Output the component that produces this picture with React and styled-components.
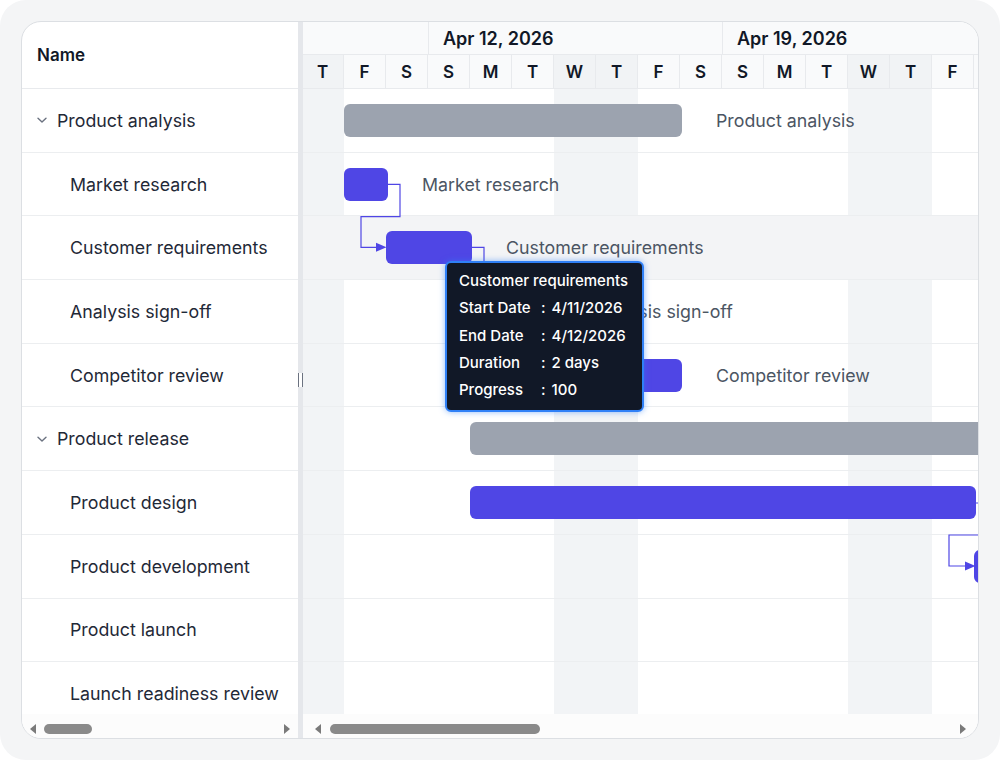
import React from "react";
import styled, { createGlobalStyle } from "styled-components";

const GlobalStyle = createGlobalStyle`
  html, body { margin: 0; padding: 0; background: #ffffff; }
  body { font-family: Inter, "Noto Sans", sans-serif; -webkit-font-smoothing: antialiased; }
  * { box-sizing: border-box; }
`;

const DAY = 42;
const ROW_H = 63.7;
const BAR_COLOR = "#4f46e5";
const SUMMARY_COLOR = "#9ca3af";

const days = ["T", "F", "S", "S", "M", "T", "W", "T", "F", "S", "S", "M", "T", "W", "T", "F", "S"];
const shaded = new Set([0, 6, 7, 13, 14]);

const weeks = [
  { label: "", span: 3 },
  { label: "Apr 12, 2026", span: 7 },
  { label: "Apr 19, 2026", span: 7 },
];

const tasks = [
  { name: "Product analysis", parent: true, start: 1, dur: 8, summary: true, label: true },
  { name: "Market research", start: 1, dur: 1, label: true },
  { name: "Customer requirements", start: 2, dur: 2, label: true, highlight: true },
  { name: "Analysis sign-off", start: 6.1, dur: 0.5, label: true, labelOffset: 10 },
  { name: "Competitor review", start: 4, dur: 5, label: true },
  { name: "Product release", parent: true, start: 4, dur: 14, summary: true },
  { name: "Product design", start: 4, dur: 12 },
  { name: "Product development", start: 16, dur: 3 },
  { name: "Product launch" },
  { name: "Launch readiness review" },
];

const Page = styled.div`
  width: 1000px;
  height: 760px;
  padding: 21px;
  background: #f4f5f6;
  border-radius: 26px;
`;

const Card = styled.div`
  position: relative;
  height: 718px;
  border: 1px solid #dcdfe3;
  border-radius: 20px;
  background: #ffffff;
  overflow: hidden;
  display: grid;
  grid-template-columns: 276px 5px 1fr;
`;

const Panel = styled.div`
  display: flex;
  flex-direction: column;
  min-width: 0;
  overflow: hidden;
`;

const GridHeader = styled.div`
  height: 67px;
  flex: none;
  display: flex;
  align-items: center;
  padding-left: 15px;
  border-bottom: 1px solid #e8eaed;
  font-size: 17px;
  font-weight: 600;
  color: #111827;
`;

const Body = styled.div`
  flex: 1;
  overflow: hidden;
  position: relative;
`;

const GridRow = styled.div`
  height: ${ROW_H}px;
  display: flex;
  align-items: center;
  padding-left: ${(p) => (p.$parent ? 14 : 48)}px;
  border-bottom: 1px solid #eceef0;
  font-size: 17.8px;
  color: #1f2937;
  white-space: nowrap;
`;

const Chevron = styled.svg`
  width: 12px;
  height: 12px;
  margin-right: 9px;
  flex: none;
`;

const Splitter = styled.div`
  background: #e5e7eb;
  display: flex;
  align-items: center;
  justify-content: center;
`;

const Grip = styled.div`
  width: 5px;
  height: 14px;
  background: #ffffff;
  border-left: 1.5px solid #6b7280;
  border-right: 1.5px solid #6b7280;
`;

const ScrollBar = styled.div`
  height: 24px;
  flex: none;
  display: flex;
  align-items: center;
  padding: 5px ${(p) => p.$pad}px 0;
  background: #fcfcfc;
  gap: 6px;
`;

const Arrow = styled.div`
  width: 0;
  height: 0;
  border-top: 5px solid transparent;
  border-bottom: 5px solid transparent;
  ${(p) => (p.$dir === "left" ? "border-right: 6px solid #7a7a7a;" : "border-left: 6px solid #7a7a7a;")}
  flex: none;
`;

const Track = styled.div`
  flex: 1;
  display: flex;
  align-items: center;
`;

const Thumb = styled.div`
  height: 10px;
  border-radius: 5px;
  background: #8a8a8a;
  flex: none;
`;

const ChartHeader = styled.div`
  height: 67px;
  flex: none;
  display: flex;
  flex-direction: column;
  margin-left: -1px;
  background: #f9fafb;
  border-bottom: 1px solid #e8eaed;
`;

const WeekRow = styled.div`
  height: 33px;
  display: flex;
  border-bottom: 1px solid #e8eaed;
`;

const WeekCell = styled.div`
  flex: none;
  display: flex;
  align-items: center;
  padding-left: 14px;
  border-left: ${(p) => (p.$first ? "none" : "1px solid #e8eaed")};
  font-size: 18px;
  font-weight: 600;
  color: #111827;
  white-space: nowrap;
`;

const DayRow = styled.div`
  flex: 1;
  display: flex;
`;

const DayCell = styled.div`
  width: ${DAY}px;
  flex: none;
  display: flex;
  align-items: center;
  justify-content: center;
  border-right: 1px solid #e8eaed;
  background: ${(p) => (p.$shaded ? "#f1f3f5" : "transparent")};
  font-size: 17px;
  font-weight: 600;
  color: #111827;
`;

const Canvas = styled.div`
  position: relative;
  margin-left: -1px;
  width: ${days.length * DAY}px;
  height: 100%;
  background-image: repeating-linear-gradient(
    90deg,
    #f2f4f6 0 ${DAY}px,
    transparent ${DAY}px ${DAY * 6}px,
    #f2f4f6 ${DAY * 6}px ${DAY * 7}px
  );
`;

const ChartRow = styled.div`
  position: relative;
  height: ${ROW_H}px;
  border-bottom: 1px solid #eceef0;
  background: ${(p) => (p.$highlight ? "#f3f4f6" : "transparent")};
`;

const Bar = styled.div`
  position: absolute;
  top: 15px;
  height: 33px;
  border-radius: 6px;
  background: ${(p) => (p.$summary ? SUMMARY_COLOR : BAR_COLOR)};
`;

const BarLabel = styled.div`
  position: absolute;
  top: 0;
  height: 100%;
  display: flex;
  align-items: center;
  font-size: 17.8px;
  color: #4b5563;
  white-space: nowrap;
`;

const Connectors = styled.svg`
  position: absolute;
  left: 0;
  top: 0;
  overflow: visible;
  pointer-events: none;
`;

const Tooltip = styled.div`
  position: absolute;
  left: 423px;
  top: 239px;
  width: 199px;
  height: 151px;
  padding: 4px 12px;
  background: #111827;
  border: 2px solid #2f80f7;
  border-radius: 6px;
  box-shadow: 0 0 6px rgba(47, 128, 247, 0.55);
  color: #ffffff;
  font-size: 15px;
  font-weight: 500;
  line-height: 27.3px;
  z-index: 5;
`;

const TipTitle = styled.div`
  white-space: nowrap;
`;

const TipRow = styled.div`
  display: grid;
  grid-template-columns: 82px auto;
  white-space: nowrap;
`;

const Colon = styled.span`
  margin-right: 6px;
`;

function ChevronDown() {
  return (
    <Chevron viewBox="0 0 12 12">
      <path d="M2 4.2 L6 8 L10 4.2" fill="none" stroke="#6b7280" strokeWidth="1.4" strokeLinecap="round" strokeLinejoin="round" />
    </Chevron>
  );
}

function HScroll({ pad, thumbLeft, thumbWidth }) {
  return (
    <ScrollBar $pad={pad}>
      <Arrow $dir="left" />
      <Track>
        <Thumb style={{ marginLeft: thumbLeft, width: thumbWidth }} />
      </Track>
      <Arrow $dir="right" />
    </ScrollBar>
  );
}

export default function App() {
  return (
    <>
      <GlobalStyle />
      <Page>
        <Card>
          <Panel>
            <GridHeader>Name</GridHeader>
            <Body>
              {tasks.map((t) => (
                <GridRow key={t.name} $parent={t.parent}>
                  {t.parent && <ChevronDown />}
                  {t.name}
                </GridRow>
              ))}
            </Body>
            <HScroll pad={8} thumbLeft={2} thumbWidth={48} />
          </Panel>
          <Splitter>
            <Grip />
          </Splitter>
          <Panel>
            <ChartHeader>
              <WeekRow>
                {weeks.map((w, i) => (
                  <WeekCell key={i} $first={i === 0} style={{ width: w.span * DAY }}>
                    {w.label}
                  </WeekCell>
                ))}
              </WeekRow>
              <DayRow>
                {days.map((d, i) => (
                  <DayCell key={i} $shaded={shaded.has(i)}>
                    {d}
                  </DayCell>
                ))}
              </DayRow>
            </ChartHeader>
            <Body>
              <Canvas>
                {tasks.map((t) => (
                  <ChartRow key={t.name} $highlight={t.highlight}>
                    {t.dur && (
                      <Bar
                        $summary={t.summary}
                        style={{ left: t.start * DAY, width: t.dur * DAY + 2 }}
                      />
                    )}
                    {t.label && (
                      <BarLabel style={{ left: (t.start + t.dur) * DAY + 2 + (t.labelOffset || 34) }}>
                        {t.name}
                      </BarLabel>
                    )}
                  </ChartRow>
                ))}
                <Connectors width="714" height="626">
                  <g fill="none" stroke={BAR_COLOR} strokeWidth="1.2">
                    <path d="M85 95.3 H98 V127.7 H59 V158.3 H76" />
                    <path d="M170 158.3 H182 V222 H240" />
                    <path d="M674 414 H686 V446 H647 V477 H665" />
                  </g>
                  <g fill={BAR_COLOR}>
                    <polygon points="74,153.8 84.5,158.3 74,162.8" />
                    <polygon points="663,472.5 673.5,477 663,481.5" />
                  </g>
                </Connectors>
              </Canvas>
            </Body>
            <HScroll pad={12} thumbLeft={3} thumbWidth={210} />
          </Panel>
          <Tooltip>
            <TipTitle>Customer requirements</TipTitle>
            <TipRow><span>Start Date</span><span><Colon>:</Colon>4/11/2026</span></TipRow>
            <TipRow><span>End Date</span><span><Colon>:</Colon>4/12/2026</span></TipRow>
            <TipRow><span>Duration</span><span><Colon>:</Colon>2 days</span></TipRow>
            <TipRow><span>Progress</span><span><Colon>:</Colon>100</span></TipRow>
          </Tooltip>
        </Card>
      </Page>
    </>
  );
}
